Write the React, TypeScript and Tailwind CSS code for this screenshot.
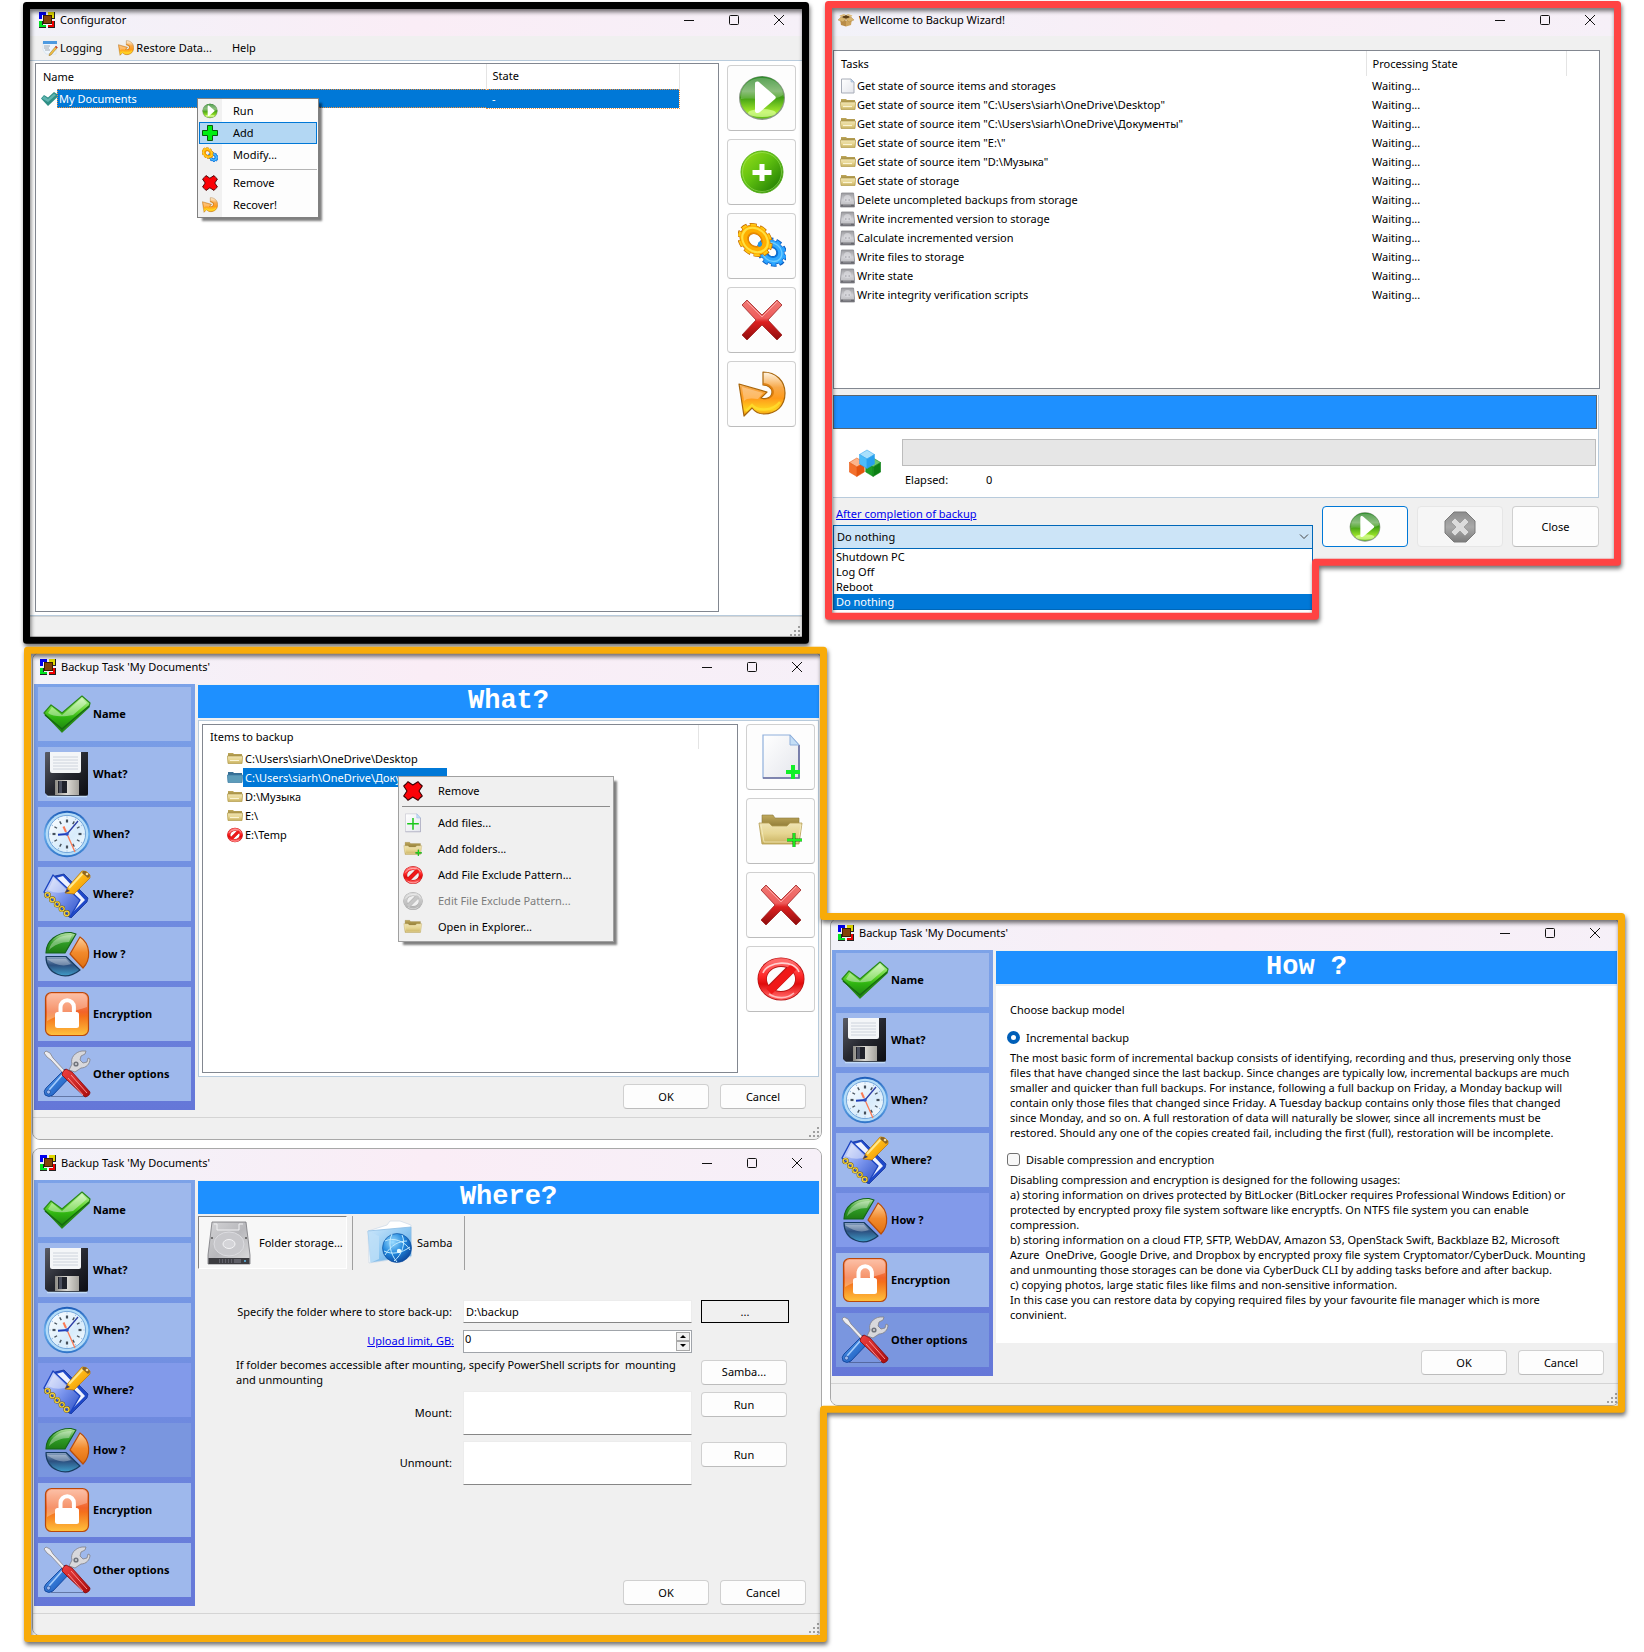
import React from "react";

type IconProps = { className?: string };

/* Shared gradients used by every drawing on the page. */
function Gradients() {
  const lin = (id: string, stops: [string, string][], x2 = 0, y2 = 1) => (
    <linearGradient id={id} x1="0" y1="0" x2={x2} y2={y2}>
      {stops.map(([o, c]) => (
        <stop key={o} offset={o} stopColor={c} />
      ))}
    </linearGradient>
  );
  return (
    <svg className="absolute h-0 w-0" aria-hidden="true">
      <defs>
        {lin("gArrow", [["0", "#fff6e6"], ["0.35", "#f7a94a"], ["0.6", "#ff9a1a"], ["0.85", "#ffd21f"], ["1", "#f08a10"]])}
        {lin("gCheck", [["0", "#c8f5b0"], ["0.4", "#5fd42c"], ["0.6", "#2fb411"], ["1", "#1c7c10"]])}
        {lin("gBall", [["0", "#2c8a2a"], ["0.35", "#6fae5c"], ["0.5", "#3f9e14"], ["0.85", "#a4ea2c"], ["1", "#5cb813"]])}
        {lin("gPlusBall", [["0", "#9be01a"], ["0.45", "#5fc010"], ["0.8", "#2f8c06"], ["1", "#55b52a"]], 1, 1)}
        {lin("gRedX", [["0", "#f07a74"], ["0.45", "#ee5c5c"], ["0.55", "#dc2020"], ["1", "#8f0c0c"]])}
        {lin("gBan", [["0", "#ff6a6a"], ["0.4", "#ff2a2a"], ["0.65", "#e00a0a"], ["1", "#ff5a5a"]])}
        {lin("gBanGray", [["0", "#d8d8d8"], ["1", "#b4b4b4"]])}
        {lin("gFolder", [["0", "#efe3b4"], ["0.5", "#e6d591"], ["1", "#c8b160"]])}
        {lin("gFolderBack", [["0", "#c0a95c"], ["1", "#8c7734"]])}
        {lin("gPage", [["0", "#ffffff"], ["1", "#e4e6ec"]], 1, 1)}
        {lin("gDisk", [["0", "#9a9a9e"], ["0.5", "#d2d2d6"], ["0.8", "#c2c2c6"], ["1", "#6a6a70"]])}
        {lin("gFloppy", [["0", "#5a5c66"], ["0.5", "#262830"], ["1", "#0c0d12"]], 1, 1)}
        {lin("gMetal", [["0", "#8c8a84"], ["0.5", "#dcdad4"], ["1", "#a4a29c"]], 1, 0)}
        {lin("gClock", [["0", "#1c5cb8"], ["0.5", "#6cb0ee"], ["1", "#2f74c8"]])}
        {lin("gFace", [["0", "#ffffff"], ["0.6", "#d8ecfb"], ["1", "#f8fcff"]], 1, 1)}
        {lin("gBook", [["0", "#dfe6fd"], ["0.5", "#7d97ee"], ["1", "#2b4fc6"]], 1, 1)}
        {lin("gPencil", [["0", "#ffdc5c"], ["0.5", "#fdb614"], ["1", "#e48c04"]], 1, 1)}
        {lin("gPieG", [["0", "#bce6a8"], ["0.5", "#2f9c26"], ["1", "#1f7c14"]])}
        {lin("gPieO", [["0", "#fdd09c"], ["0.5", "#f28a2c"], ["1", "#e07010"]])}
        {lin("gPieB", [["0", "#8fa6c4"], ["0.45", "#2c5080"], ["1", "#3f9cc8"]])}
        {lin("gLock", [["0", "#fca884"], ["0.45", "#f2642a"], ["0.55", "#f4701c"], ["1", "#ffc23c"]])}
        {lin("gBlueH", [["0", "#5aa0f0"], ["1", "#0c4cb4"]], 1, 1)}
        {lin("gRedH", [["0", "#f04040"], ["1", "#a80c0c"]], 1, 1)}
        {lin("gHdd", [["0", "#d4d4d6"], ["0.5", "#b8b8bc"], ["1", "#dededf"]], 1, 1)}
        {lin("gSamba", [["0", "#cfe8fb"], ["0.5", "#8fc8f2"], ["1", "#4f9ee0"]], 1, 1)}
        {lin("gStop", [["0", "#8c8c8c"], ["0.5", "#aaaaaa"], ["1", "#7c7c7c"]])}
        <radialGradient id="gGlobe" cx="0.35" cy="0.3" r="0.8">
          <stop offset="0" stopColor="#9cdcff" />
          <stop offset="0.5" stopColor="#1f86dc" />
          <stop offset="1" stopColor="#0a3f94" />
        </radialGradient>
      </defs>
    </svg>
  );
}

const AppIcon = () => (
  <svg className="h-4 w-4 shrink-0" viewBox="0 0 16 16" shapeRendering="crispEdges" aria-hidden="true">
    <path d="M0 0h7v3H3v4H0z" fill="#0000ee" />
    <path d="M9 0h7v7h-3V3H9z" fill="#e0d800" />
    <path d="M0 9h3v4h4v3H0z" fill="#00e020" />
    <path d="M13 9h3v7H9v-3h4z" fill="#ee0000" />
    <path d="M15 0h1v7h-3V6h2zM3 9h1v4H3zM0 15h7v1H0zM15 9h1v7H9v-1h6z" fill="#222" />
    <path d="M4 3h9v9H4z" fill="#3a1c04" />
    <path d="M5 4h7v7H5z" fill="#834208" />
  </svg>
);

const BoxIcon = () => (
  <svg className="h-4 w-4 shrink-0" viewBox="0 0 16 16" aria-hidden="true">
    <path d="M2 7l6 1.500v6L3 13z" fill="#b98c48" />
    <path d="M8 8.500L14 7l-1 6-5 1.500z" fill="#cda35c" />
    <path d="M3 5l5-2 5 2-5 2z" fill="#5c3d12" />
    <path d="M3 5L1.500 3.500 6 2l2 1zM13 5l1.500-1.500L10 2 8 3z" fill="#e0bc78" />
    <path d="M3 5L0 8l5 2 3-3zM13 5l3 3-5 2-3-3z" fill="#d9b46c" stroke="#a37c38" strokeWidth="0.4" />
  </svg>
);

const LogIcon = () => (
  <svg className="h-4 w-4 shrink-0" viewBox="0 0 16 16" aria-hidden="true">
    <path d="M1 2h13v12H4L1 10z" fill="#eef5fc" stroke="#c8d8e8" strokeWidth="0.5" />
    <path d="M1 1h14v3H1z" fill="#4d9ae0" />
    <path d="M2 6h6M2 8h5M3 10h5" stroke="#8a94a0" strokeWidth="0.8" />
    <path d="M14 6l1.5 1.5L9 15l-2 .7.6-2z" fill="#f5c243" stroke="#8c6a20" strokeWidth="0.5" />
    <path d="M14 6l1.5 1.5-1 1L13 7z" fill="#d23c3c" />
  </svg>
);

const RestoreIcon = ({ className = "h-4 w-4" }: IconProps) => (
  <svg className={className} viewBox="0 0 48 46" aria-hidden="true">
    <path
      d="M25 1C38 1 47 10 47 22C47 35 38 43 26 43C21 43 17 41 14 37L6 45L1 13L29 21L23 27C29 29 34 26 34 21C34 17 30 14 25 14Z"
      fill="url(#gArrow)"
      stroke="#a8660c"
      strokeWidth="1.2"
      strokeLinejoin="round"
    />
    <path d="M25 14C30 14 34 17 34 21C34 25 31 28 26 28C31 29 36 26 36 21C36 16 31 12 25 12Z" fill="#d87808" opacity="0.8" />
    <path d="M4 16l21 6-5 6C14 27 8 27 6 30z" fill="#fff" opacity="0.3" />
    <path d="M8 40l6-6c5 6 20 7 28-3" fill="none" stroke="#ffe02e" strokeWidth="2.4" opacity="0.8" />
  </svg>
);

const CheckIcon = () => (
  <svg className="h-[38px] w-12" viewBox="0 0 48 38" aria-hidden="true">
    <path d="M1 18L8 10L19 18L39 1L47 8L46 12L19 37Z" fill="url(#gCheck)" stroke="#2a8a1a" strokeWidth="1.2" strokeLinejoin="round" />
    <path d="M9 12l10 8L39 3l5 5L30 20C20 22 10 22 5 18z" fill="#fff" opacity="0.4" />
    <path d="M2 20l17 14 27-23" fill="none" stroke="#166a10" strokeWidth="1.4" />
  </svg>
);

const SmallCheck = () => (
  <svg className="h-4 w-4 shrink-0" viewBox="0 0 16 16" aria-hidden="true">
    <path d="M0 7.500L3 4l4 2.500L13 1l3 2v3.500L7 15z" fill="#2f8f86" />
    <path d="M1 7.500L3 5l4 3 6-5.500L15 4 7 11z" fill="#5fb4b0" />
  </svg>
);

const PlayIcon = ({ className = "h-12 w-12" }: IconProps) => (
  <svg className={className} viewBox="0 0 48 46" aria-hidden="true">
    <ellipse cx="24" cy="23" rx="23" ry="22" fill="#8a9a86" />
    <ellipse cx="24" cy="22.5" rx="22" ry="21" fill="url(#gBall)" />
    <path d="M3 24C3 10 12 3 24 3s21 7 21 17c-12 8-26 2-42 4z" fill="#fff" opacity="0.2" />
    <ellipse cx="24" cy="38" rx="14" ry="4" fill="#dcff9c" opacity="0.7" />
    <path d="M17 9c0-3 3-3 5-1l15 13c1 1 1 2 0 3L22 37c-2 2-5 1-5-1z" fill="#fff" />
  </svg>
);

const PlusBall = () => (
  <svg className="h-11 w-11" viewBox="0 0 44 44" aria-hidden="true">
    <circle cx="22" cy="22" r="21" fill="url(#gPlusBall)" stroke="#57b01c" strokeWidth="1" />
    <circle cx="22" cy="22" r="19.5" fill="none" stroke="#a6e56a" strokeWidth="0.8" opacity="0.7" />
    <path d="M19.5 14h5v6h7v5h-7v6h-5v-6h-7v-5h7z" fill="#fff" />
  </svg>
);

const PlusPixel = () => (
  <svg className="h-4 w-4" viewBox="0 0 16 16" aria-hidden="true">
    <path d="M5.5 .5h5v5h5v5h-5v5h-5v-5h-5v-5h5z" fill="#00f010" stroke="#0a5a0a" />
  </svg>
);

const CrossPixel = ({ className = "h-4 w-4" }: IconProps) => (
  <svg className={className} viewBox="0 0 20 20" aria-hidden="true">
    <path
      d="M5 .7L9.8 4 15 .7 17 3l2.3 2L16 10l3.3 5-2.3 2-2 2.3L9.8 16 5 19.3 3 17 .7 15 4 10 .7 5 3 3z"
      fill="#fb0207"
      stroke="#3a0000"
      strokeWidth="1.1"
      strokeLinejoin="bevel"
    />
  </svg>
);

const GearsIcon = ({ className = "h-12 w-12" }: IconProps) => (
  <svg className={className} viewBox="0 0 48 46" fill="none" aria-hidden="true">
    <g transform="translate(34 29) rotate(40) scale(1.05 .88)">
      <circle r="13" stroke="#0a5cc0" strokeWidth="5" strokeDasharray="5.2 2.970" />
      <circle r="8.6" stroke="#0a5cc0" strokeWidth="8.600" />
      <circle r="12.6" stroke="#2aa2ff" strokeWidth="3.6" strokeDasharray="4 3.920" strokeDashoffset="-.5" />
      <circle r="8.8" stroke="#2fa8ff" strokeWidth="7" />
      <circle r="10" stroke="#6cccff" strokeWidth="1.400" />
      <circle r="5.600" stroke="#0c74d8" strokeWidth="1.4" />
    </g>
    <g transform="translate(17 17) rotate(40) scale(1.06 .86)">
      <circle r="15.500" stroke="#c46a00" strokeWidth="5" strokeDasharray="6.600 3.140" />
      <circle r="11" stroke="#c46a00" strokeWidth="9.400" />
      <circle r="15" stroke="#ffc814" strokeWidth="4.400" strokeDasharray="5.400 4.025" strokeDashoffset="-.5" />
      <circle r="11.200" stroke="#ffae00" strokeWidth="8" />
      <circle r="13" stroke="#ffe040" strokeWidth="2.2" />
      <circle r="7.400" stroke="#e88a00" strokeWidth="1.4" />
    </g>
    <path d="M20 20c2-3 4-1 4 1s-2 4-4 2z" fill="#1d96ea" />
  </svg>
);

const RedX = () => (
  <svg className="h-10 w-10" viewBox="0 0 40 40" aria-hidden="true">
    <path
      d="M5 0L0 5L14 20L0 35L5 40L20 25L35 40L40 35L26 20L40 5L35 0L20 15Z"
      fill="url(#gRedX)"
      stroke="#9c2222"
      strokeWidth="0.8"
      strokeLinejoin="round"
    />
    <path d="M5 2L20 17 35 2" fill="none" stroke="#fbb" strokeWidth="1" opacity="0.7" />
  </svg>
);

const BanIcon = ({ className = "h-12 w-12", gray = false }: IconProps & { gray?: boolean }) => (
  <svg className={className} viewBox="0 0 48 44" fill="none" aria-hidden="true">
    <ellipse cx="24" cy="22" rx="18.8" ry="16.8" stroke={gray ? "#a8a8a8" : "#b81414"} strokeWidth="9.400" />
    <path d="M36 10L12 34" stroke={gray ? "#a8a8a8" : "#b81414"} strokeWidth="9.400" />
    <ellipse cx="24" cy="22" rx="18.8" ry="16.8" stroke={gray ? "url(#gBanGray)" : "url(#gBan)"} strokeWidth="7.800" />
    <path d="M36.5 10L12 34.5" stroke={gray ? "#c6c6c6" : "#f01818"} strokeWidth="7.800" />
    <path d="M6 16C10 4 38 2 42 15" stroke="#fff" strokeWidth="1.6" opacity="0.7" />
    <path d="M12 37c8 5 18 5 25-1" stroke="#fff" strokeWidth="1.6" opacity="0.6" />
  </svg>
);

const PageIcon = ({ className = "h-4 w-4" }: IconProps) => (
  <svg className={className} viewBox="0 0 16 16" aria-hidden="true">
    <path d="M1.5 1H11l3 3v11H1.500z" fill="url(#gPage)" stroke="#a8adb8" />
    <path d="M11 1v3h3z" fill="#bcd8f2" stroke="#a0b0c8" strokeWidth="0.6" />
  </svg>
);

const FolderIcon = ({ className = "h-4 w-4", blue = false }: IconProps & { blue?: boolean }) => (
  <svg className={className} viewBox="0 0 16 16" aria-hidden="true">
    <path d="M1 2h5l1 1h8v5H1z" fill={blue ? "#376f96" : "url(#gFolderBack)"} />
    <path d="M0.300 5h15.400L15 12.500H1z" fill={blue ? "#5c9cba" : "url(#gFolder)"} stroke={blue ? "#3c7ca4" : "#b39c4c"} strokeWidth="0.7" />
    {!blue && <path d="M3 9.500h9" stroke="#fbf4d4" strokeWidth="1.2" />}
  </svg>
);

const DiskIcon = () => (
  <svg className="h-4 w-4 shrink-0" viewBox="0 0 16 16" aria-hidden="true">
    <path d="M1.500 1h12l1 10v4H.5v-4z" fill="url(#gDisk)" stroke="#8a8a90" strokeWidth="0.8" />
    <circle cx="7.5" cy="6.500" r="3.600" fill="#dcdce0" opacity="0.700" />
    <path d="M5 8h1.500M8.500 8H10" stroke="#8a8a90" strokeWidth="0.800" />
    <path d="M1 12.500h13v2H1z" fill="#68686e" />
    <path d="M3 13h8" stroke="#b0b0b4" strokeWidth="0.8" />
  </svg>
);

const CubesIcon = () => {
  const cube = (x: number, y: number, top: string, left: string, right: string) => (
    <g transform={`translate(${x} ${y})`} stroke={right} strokeWidth="0.5" strokeLinejoin="round">
      <path d="M7.500 0L15 4.500 7.500 9 0 4.500z" fill={top} />
      <path d="M0 4.500L7.500 9v9.500L0 14z" fill={left} />
      <path d="M15 4.500L7.500 9v9.500L15 14z" fill={right} />
    </g>
  );
  return (
    <svg className="h-8 w-8" viewBox="0 0 32 32" aria-hidden="true">
      {cube(0.3, 10, "#fbb48c", "#f4702c", "#e4540f")}
      {cube(16.7, 10, "#6cc86c", "#1c9c24", "#0c8014")}
      {cube(10.5, 2, "#a8e0fc", "#4cbcf8", "#28a0ee")}
    </svg>
  );
};

const StopIcon = () => (
  <svg className="h-8 w-8" viewBox="0 0 32 32" aria-hidden="true">
    <path d="M10 1h12l9 9v12l-9 9H10l-9-9V10z" fill="url(#gStop)" stroke="#7a7a7a" />
    <path d="M11 7l5 5 5-5 4 4-5 5 5 5-4 4-5-5-5 5-4-4 5-5-5-5z" fill="#dcdcdc" stroke="#8a8a8a" strokeWidth="0.6" />
  </svg>
);

const PageAdd = ({ className = "h-12 w-12", small = false }: IconProps & { small?: boolean }) => (
  <svg className={className} viewBox="0 0 48 48" aria-hidden="true">
    <path d="M6 2h27l9 10v33H6z" fill="url(#gPage)" stroke={small ? "#b8b8c4" : "#8fb0dc"} strokeWidth="1.2" />
    <path d="M42 12v33H6" fill="none" stroke="#6a6c9c" strokeWidth="1.6" opacity={small ? 0.4 : 1} />
    <path d="M33 2v10h9z" fill="#c4def6" stroke="#8fb0dc" />
    {small ? (
      <path d="M24 12v28M10 26h28" stroke="#18c818" strokeWidth="3.6" />
    ) : (
      <path d="M36 32v14M29 39h14" stroke="#12f028" strokeWidth="4" />
    )}
  </svg>
);

const FolderAdd = ({ className = "h-12 w-12", plus = true }: IconProps & { plus?: boolean }) => (
  <svg className={className} viewBox="0 0 48 48" aria-hidden="true">
    <path d="M5 8h11l2 3h24v10H5z" fill="url(#gFolderBack)" stroke="#8c7a3c" strokeWidth="0.6" />
    <path d="M2 16h10l3 3h15l3-3h12l-3 21H5z" fill="url(#gFolder)" stroke="#b49c50" strokeWidth="0.8" />
    <path d="M4 18l3 17h34l3-17" fill="none" stroke="#f8efc4" strokeWidth="1" opacity="0.7" />
    {plus && (
      <>
        <path d="M37 26v14M30 33h15" stroke="#0a7a0a" strokeWidth="3" />
        <path d="M37 26v14M30 33h15" stroke="#1ef020" strokeWidth="1.8" />
      </>
    )}
  </svg>
);

const FloppyIcon = () => (
  <svg className="h-12 w-12" viewBox="0 0 48 48" aria-hidden="true">
    <path d="M2 3q0-1 1-1h42v42q0 2-2 2H5l-3-3z" fill="url(#gFloppy)" />
    <path d="M7 2h31v19q0 2-2 2H9q-2 0-2-2z" fill="#f4f6f8" />
    <path d="M10 7h25M10 10h25M10 13h25M10 16h25M10 19h25" stroke="#c4ccd4" strokeWidth="0.8" />
    <path d="M12 30h24v15H12z" fill="url(#gMetal)" />
    <path d="M15 31h9v12h-9z" fill="#20222a" />
    <path d="M16 31h3v12h-3z" fill="#4a4e5c" />
    <path d="M4 46.5h40" stroke="#c4dcf8" strokeWidth="1.4" />
  </svg>
);

const ClockIcon = () => (
  <svg className="h-12 w-12" viewBox="0 0 48 48" aria-hidden="true">
    <circle cx="24" cy="24" r="23.3" fill="url(#gClock)" />
    <circle cx="24" cy="24" r="21.3" fill="#b4dcf8" />
    <circle cx="24" cy="24" r="18.6" fill="url(#gFace)" stroke="#5c94d0" strokeWidth="0.8" />
    {Array.from({ length: 12 }, (_, i) => (
      <path key={i} d="M24 9.5v3" stroke="#44505c" strokeWidth={i % 3 === 0 ? 2.2 : 1.4} transform={`rotate(${i * 30} 24 24)`} />
    ))}
    {Array.from({ length: 12 }, (_, i) => (
      <path key={i} d="M24 6.5v1" stroke="#8cb4dc" strokeWidth="1" transform={`rotate(${i * 30} 24 24)`} />
    ))}
    <path d="M24 24l8 18" stroke="#fb7a54" strokeWidth="1.3" />
    <path d="M20.5 16.500l2.5 5.5" stroke="#fb7a54" strokeWidth="2" />
    <path d="M24 24L35 11" stroke="#2a3ca4" strokeWidth="1.3" />
    <path d="M25 24l-10 .8" stroke="#1c3cb8" strokeWidth="2" />
    <circle cx="24" cy="24" r="1.8" fill="#2c50c8" />
  </svg>
);

const NotebookIcon = () => (
  <svg className="h-12 w-12" viewBox="0 0 48 48" aria-hidden="true">
    <path d="M12 6l9-2 24 24-1 4-16 16-3-2z" fill="#1f48c8" stroke="#13349c" strokeWidth="0.8" />
    <path d="M13 8l7-2 22 24-14 14z" fill="#eef2ff" />
    <path d="M1 22L10 5L37 30L27 47Z" fill="url(#gBook)" stroke="#1c44c0" strokeWidth="1.4" strokeLinejoin="round" />
    <path d="M5 20l6-12 14 13c-6 2-12 3-20-1z" fill="#fff" opacity="0.4" />
    {[0, 1, 2, 3, 4].map((i) => (
      <g key={i} fill="none">
        <circle cx={4.5 + i * 4.8} cy={25 + i * 4.6} r="2.3" stroke="#6c5a10" strokeWidth="2" />
        <circle cx={4.5 + i * 4.8} cy={25 + i * 4.6} r="2.3" stroke="#f0d040" strokeWidth="1.2" />
      </g>
    ))}
    <path d="M22 23l3-6L39 1q4-1 8 4v3L31 24z" fill="url(#gPencil)" stroke="#b87404" strokeWidth="0.7" />
    <path d="M26 18L41 2" stroke="#ffe88c" strokeWidth="2" />
    <path d="M40 1q5 0 7 5l-2 2-6-5z" fill="#8c6420" />
    <circle cx="44" cy="4" r="1.3" fill="#f4dca4" />
    <path d="M22 23l2-4 3 2z" fill="#333a6c" />
  </svg>
);

const PieIcon = () => (
  <svg className="h-12 w-12" viewBox="0 0 48 48" aria-hidden="true">
    <path d="M22 23H3C3 11 14 2 28 2.500L33 4Z" fill="url(#gPieG)" stroke="#14641a" strokeWidth="1.2" strokeLinejoin="round" />
    <path d="M27 24L37 7C48 14 48 30 40 38Z" fill="url(#gPieO)" stroke="#b84c08" strokeWidth="1.2" strokeLinejoin="round" />
    <path d="M3 26.500H23L37 40C22 52 3 44 3 26.500Z" fill="url(#gPieB)" stroke="#183c60" strokeWidth="1.2" strokeLinejoin="round" />
    <path d="M6 20C8 11 16 5 29 5L26 12C18 12 11 15 6 20z" fill="#fff" opacity="0.35" />
    <path d="M4 29h19l5 5c-8 3-16 1-24-5z" fill="#fff" opacity="0.3" />
  </svg>
);

const LockIcon = () => (
  <svg className="h-12 w-12" viewBox="0 0 48 48" aria-hidden="true">
    <rect x="2.5" y="2.5" width="43" height="43" rx="6" fill="url(#gLock)" stroke="#b8480c" strokeWidth="1.2" />
    <path d="M4 9q0-5 5-5h30q5 0 5 5v8C30 22 18 23 4 31z" fill="#fff" opacity="0.3" />
    <path d="M17.5 24v-7a6.700 6.700 0 0 1 13.400 0v7" fill="none" stroke="#fff" strokeWidth="4" />
    <rect x="12" y="22" width="24" height="16" rx="2.5" fill="#fff" />
  </svg>
);

const ToolsIcon = () => (
  <svg className="h-12 w-12" viewBox="0 0 48 48" aria-hidden="true">
    <path d="M8 46.500h36" stroke="#3c4c78" strokeWidth="1.2" opacity="0.6" />
    <path
      d="M26 20l3-6c-2-6 3-12 10-13h4l-1 3-4 2-1 4 3 3 4-1 1-4 2 1c0 5-4 9-9 9l-6 4z"
      fill="#d8d8dc"
      stroke="#808088"
      strokeWidth="0.8"
    />
    <circle cx="33" cy="14" r="2.600" fill="#70747c" />
    <circle cx="33" cy="14" r="1" fill="#d8d8dc" />
    <path d="M22 19l7 6L10 45q-4 3-8 0-2-4 1-7z" fill="url(#gBlueH)" stroke="#0a3c94" strokeWidth="0.8" />
    <path d="M20 24L6 40" stroke="#a4ccfc" strokeWidth="1.6" />
    <circle cx="5.500" cy="42" r="2" fill="#9eb8ec" stroke="#0a3c94" strokeWidth="0.6" />
    <path d="M1 3l2-2 4 2 3 5 12 13-2 2L8 10 4 7z" fill="#ececf0" stroke="#84848c" strokeWidth="0.8" />
    <path d="M19 25q0-4 4-6l6 3 18 20q0 4-5 5L24 30z" fill="url(#gRedH)" stroke="#880808" strokeWidth="0.8" strokeLinejoin="round" />
    <path d="M28 25l16 18M25 28l15 17" stroke="#fb9090" strokeWidth="1" />
  </svg>
);

const HddIcon = () => (
  <svg className="h-11 w-11" viewBox="0 0 44 44" aria-hidden="true">
    <path d="M5 1h34l4 33v9H1v-9z" fill="url(#gHdd)" stroke="#77777c" strokeWidth="0.8" />
    <path d="M7 3h3v6h22V3h4" fill="none" stroke="#f0f0f2" strokeWidth="1" />
    <ellipse cx="22" cy="23" rx="15" ry="12" fill="#c8c8cc" stroke="#dcdce0" strokeWidth="1" />
    <ellipse cx="22" cy="23" rx="6" ry="4.5" fill="#d4d4d8" stroke="#f4f4f6" strokeWidth="1" />
    <circle cx="5" cy="17" r="1" fill="#555" />
    <circle cx="39" cy="17" r="1" fill="#555" />
    <path d="M1.5 37h41v6h-41z" fill="#3c3c40" />
    <path d="M12 38h22v4H12z" fill="#606068" />
    <path d="M14 38v4M17 38v4M20 38v4M23 38v4M26 38v4" stroke="#202024" />
    <circle cx="38" cy="40" r="0.9" fill="#6cf" />
  </svg>
);

const SambaIcon = () => (
  <svg className="h-12 w-12" viewBox="0 0 48 48" aria-hidden="true">
    <path d="M3 12l19-6 3-4 10 0 11 4v32L4 44z" fill="#fff" stroke="#d0dce8" strokeWidth="0.8" />
    <path d="M3 12l43-4v29L6 43z" fill="url(#gSamba)" stroke="#8cbce4" strokeWidth="0.8" />
    <path d="M3 12l11 5v23l-9 4z" fill="#bfe0f8" opacity="0.8" />
    <circle cx="32" cy="29" r="14.5" fill="url(#gGlobe)" stroke="#0a4c9c" strokeWidth="0.6" />
    <path
      d="M20 22c8-4 20 0 25 9M19 32c8 4 18 2 26-4M27 15c-4 8-2 20 5 28M37 16c4 8 0 20-8 26M20 36c6-10 14-14 22-14"
      fill="none"
      stroke="#bfeaff"
      strokeWidth="1"
    />
    <circle cx="34" cy="32" r="2.2" fill="#e8fbff" />
  </svg>
);

/* ---------- window chrome ---------- */

function TitleBar({ icon, title, className }: { icon: React.ReactNode; title: string; className: string }) {
  const btn = "flex h-5 w-[45px] items-center justify-center";
  return (
    <header className={"flex shrink-0 items-start bg-linear-to-r from-[#f2f2f9] via-[#faedf6] to-[#f6f0f8] " + className}>
      <div className="flex h-5 flex-1 items-center gap-[5px]">
        {icon}
        <h2 className="text-[11px] font-normal">{title}</h2>
      </div>
      <button className={btn} aria-label="Minimize">
        <svg className="h-[10px] w-[10px]" viewBox="0 0 10 10" aria-hidden="true">
          <path d="M0 5.5h10" stroke="#111" />
        </svg>
      </button>
      <button className={btn} aria-label="Maximize">
        <svg className="h-[10px] w-[10px]" viewBox="0 0 10 10" aria-hidden="true">
          <rect x="0.5" y="0.5" width="9" height="9" rx="1" fill="none" stroke="#111" />
        </svg>
      </button>
      <button className={btn} aria-label="Close window">
        <svg className="h-[10px] w-[10px]" viewBox="0 0 10 10" aria-hidden="true">
          <path d="M0 0l10 10M10 0L0 10" stroke="#111" />
        </svg>
      </button>
    </header>
  );
}

function StatusBar() {
  return (
    <footer className="flex h-[22px] shrink-0 items-end justify-end border-t border-[#d4d4d4] bg-[#f0f0f0] p-[2px]">
      <svg className="h-[11px] w-[11px]" viewBox="0 0 11 11" fill="#a0a0a0" aria-hidden="true">
        <path d="M9 1h2v2H9zM5 5h2v2H5zM9 5h2v2H9zM1 9h2v2H1zM5 9h2v2H5zM9 9h2v2H9z" />
      </svg>
    </footer>
  );
}

const flatButton = "flex items-center justify-center rounded border border-[#d0d0d0] border-b-[#bcbcbc] bg-[#fdfdfd]";

function PushButton({ children }: { children: React.ReactNode }) {
  return <button className={flatButton + " h-[25px] w-[86px]"}>{children}</button>;
}

function ToolButton({ label, children }: { label: string; children: React.ReactNode }) {
  return (
    <button aria-label={label} className={flatButton + " h-[66px] w-[69px]"}>
      {children}
    </button>
  );
}

/* ---------- task window ---------- */

const sections: [string, () => React.JSX.Element][] = [
  ["Name", CheckIcon],
  ["What?", FloppyIcon],
  ["When?", ClockIcon],
  ["Where?", NotebookIcon],
  ["How ?", PieIcon],
  ["Encryption", LockIcon],
  ["Other options", ToolsIcon],
];

function TaskWindow({
  heading,
  active,
  hover,
  className,
  children,
}: {
  heading: string;
  active?: string;
  hover?: string;
  className: string;
  children: React.ReactNode;
}) {
  return (
    <section className={"flex flex-col overflow-hidden rounded-lg border border-[#a8a8a8] bg-[#f0f0f0] " + className}>
      <TitleBar icon={<AppIcon />} title="Backup Task 'My Documents'" className="h-[31px] pt-1 pr-[2px] pl-[7px]" />
      <div className="flex gap-[3px] pr-[2px] pl-px">
        <nav className="mb-[7px] flex w-[161px] shrink-0 flex-col gap-[6px] bg-linear-to-b from-[#7ca2e8] to-[#6577d8] px-1 pt-[3px] pb-[9px]">
          {sections.map(([name, Icon]) => (
            <button
              key={name}
              className={
                "flex h-[54px] items-center gap-[2px] pl-[5px] font-bold " +
                (name === active ? "bg-[#829aea]" : name === hover ? "bg-[#7a96df]" : "bg-[#9eb8ec]")
              }
            >
              <Icon />
              {name}
            </button>
          ))}
        </nav>
        <div className="flex min-w-0 flex-1 flex-col pt-px">
          <h3 className="h-[33px] shrink-0 bg-[#1e90ff] text-center font-['Liberation_Mono',monospace] text-[27px] leading-[33px] font-bold text-white">
            {heading}
          </h3>
          {children}
          <div className="mt-[7px] mb-2 flex shrink-0 justify-end gap-[11px] pr-[13px]">
            <PushButton>OK</PushButton>
            <PushButton>Cancel</PushButton>
          </div>
        </div>
      </div>
      <StatusBar />
    </section>
  );
}

/* ---------- Configurator ---------- */

function ConfiguratorMenu() {
  const item = "flex h-[22px] items-center gap-[15px] border pl-[2px] pr-2 text-left";
  const rows: [string, React.ReactNode][] = [
    ["Run", <PlayIcon className="h-4 w-4" />],
    ["Add", <PlusPixel />],
    ["Modify...", <GearsIcon className="h-4 w-4" />],
    ["Remove", <CrossPixel />],
    ["Recover!", <RestoreIcon />],
  ];
  return (
    <div
      role="menu"
      className="absolute top-[34px] left-[161px] flex w-[122px] flex-col border border-[#808080] bg-[linear-gradient(to_right,#f1f1f1_24px,#fdfdfd_24px)] p-px shadow-[4px_4px_2px_-1px_rgba(0,0,0,0.5)]"
    >
      {rows.map(([name, icon]) => (
        <React.Fragment key={name}>
          {name === "Remove" && <div role="separator" className="my-[2px] ml-[31px] h-px border-b border-[#b4b4b4] pb-px" />}
          <button role="menuitem" className={item + (name === "Add" ? " border-[#0078d7] bg-[#b3d7f3]" : " border-transparent")}>
            {icon}
            {name}
          </button>
        </React.Fragment>
      ))}
    </div>
  );
}

function Configurator() {
  const menu = "flex items-center gap-[2px]";
  return (
    <section className="mt-[9px] mr-7 ml-[30px] flex flex-col bg-white">
      <TitleBar icon={<AppIcon />} title="Configurator" className="h-[27px] pt-px pr-px pl-[9px]" />
      <nav className="flex h-[24px] items-center bg-[#f0f0f0] pl-3">
        <button className={menu}>
          <LogIcon />
          Logging
        </button>
        <button className={menu + " ml-4"}>
          <RestoreIcon />
          Restore Data...
        </button>
        <button className={menu + " ml-5"}>Help</button>
      </nav>
      <div className="flex gap-2 border-y border-[#b8cbdc] pt-[2px] pr-[6px] pb-[3px] pl-[5px]">
        <div className="relative min-h-[549px] flex-1 border border-[#828790]">
          <table className="w-full table-fixed border-collapse text-left">
            <colgroup>
              <col className="w-[450px]" />
              <col className="w-[193px]" />
              <col />
            </colgroup>
            <thead>
              <tr className="h-[25px]">
                <th className="border-r border-[#e4e4e4] pl-[7px] font-normal">Name</th>
                <th className="border-r border-[#e4e4e4] pl-[6px] font-normal">State</th>
                <td />
              </tr>
            </thead>
            <tbody>
              <tr>
                <td className="p-0">
                  <div className="flex h-[19px] items-center pl-[5px]">
                    <SmallCheck />
                    <span className="flex h-[19px] flex-1 items-center border-y border-l border-dotted border-[#f0913c] bg-[#0078d7] pl-px text-white">
                      My Documents
                    </span>
                  </div>
                </td>
                <td className="border-y border-r border-dotted border-[#f0913c] bg-[#0078d7] p-0 pl-[6px] text-white">-</td>
                <td />
              </tr>
            </tbody>
          </table>
          <ConfiguratorMenu />
        </div>
        <div className="flex w-[69px] flex-col gap-2 pt-[2px]">
          <ToolButton label="Run">
            <PlayIcon />
          </ToolButton>
          <ToolButton label="Add">
            <PlusBall />
          </ToolButton>
          <ToolButton label="Modify">
            <GearsIcon />
          </ToolButton>
          <ToolButton label="Remove">
            <RedX />
          </ToolButton>
          <ToolButton label="Recover">
            <RestoreIcon className="h-12 w-12" />
          </ToolButton>
        </div>
      </div>
      <StatusBar />
    </section>
  );
}

/* ---------- Wizard ---------- */

const tasks: [string, "page" | "folder" | "disk"][] = [
  ["Get state of source items and storages", "page"],
  ['Get state of source item "C:\\Users\\siarh\\OneDrive\\Desktop"', "folder"],
  ['Get state of source item "C:\\Users\\siarh\\OneDrive\\Документы"', "folder"],
  ['Get state of source item "E:\\"', "folder"],
  ['Get state of source item "D:\\Музыка"', "folder"],
  ["Get state of storage", "folder"],
  ["Delete uncompleted backups from storage", "disk"],
  ["Write incremented version to storage", "disk"],
  ["Calculate incremented version", "disk"],
  ["Write files to storage", "disk"],
  ["Write state", "disk"],
  ["Write integrity verification scripts", "disk"],
];

function Wizard() {
  return (
    <section className="mt-[9px] mr-[30px] ml-[3px] flex flex-col bg-[#f0f0f0]">
      <TitleBar icon={<BoxIcon />} title="Wellcome to Backup Wizard!" className="h-[27px] pt-px pr-[2px] pl-[5px]" />
      <div className="mt-[14px] mr-[14px] min-h-[339px] border border-[#828790] bg-white">
        <table className="w-full table-fixed border-collapse text-left">
          <colgroup>
            <col />
            <col className="w-[200px]" />
            <col className="w-[33px]" />
          </colgroup>
          <thead>
            <tr className="h-[25px]">
              <th className="border-r border-[#e4e4e4] pl-[7px] font-normal">Tasks</th>
              <th className="border-r border-[#e4e4e4] pl-[6px] font-normal">Processing State</th>
              <td />
            </tr>
          </thead>
          <tbody>
            {tasks.map(([name, kind]) => (
              <tr key={name} className="h-[19px]">
                <td className="p-0 pl-[6px]">
                  <div className="flex items-center gap-px">
                    {kind === "page" ? <PageIcon /> : kind === "folder" ? <FolderIcon /> : <DiskIcon />}
                    {name}
                  </div>
                </td>
                <td className="p-0 pl-[6px]">Waiting...</td>
                <td />
              </tr>
            ))}
          </tbody>
        </table>
      </div>
      <div className="mt-[6px] mr-[15px] border border-t-0 border-l-0 border-[#b8cbdc] bg-white">
        <div className="mr-px h-[34px] border border-[#5c666e] bg-[#1e90ff]" />
        <div className="flex items-center pt-[10px] pr-[2px] pb-[9px]">
          <div className="w-[69px] shrink-0 pl-4">
            <CubesIcon />
          </div>
          <div className="flex-1">
            <div role="progressbar" aria-label="Backup progress" aria-valuenow={0} className="h-[27px] border border-[#bcbcbc] bg-[#e6e6e6]" />
            <div className="mt-[6px] flex h-4 items-center pl-[3px]">
              <span className="w-[81px]">Elapsed:</span>
              <span>0</span>
            </div>
          </div>
        </div>
      </div>
      <div className="flex gap-[9px] pt-2 pr-[15px] pb-[11px]">
        <div className="relative flex-1">
          <a href="#completion" id="completion" className="ml-[3px] block h-[19px] leading-4 text-[#0000ee] underline">
            After completion of backup
          </a>
          <div className="relative">
            <select
              aria-labelledby="completion"
              defaultValue="Do nothing"
              className="h-[24px] w-full appearance-none border border-[#0067b8] bg-[#cce4f7] pl-[3px]"
            >
              <option>Do nothing</option>
            </select>
            <svg className="pointer-events-none absolute top-[9px] right-1 h-[6px] w-[10px]" viewBox="0 0 10 6" fill="none" aria-hidden="true">
              <path d="M1 .5l4 4 4-4" stroke="#444" />
            </svg>
          </div>
          <ul className="absolute top-[42px] right-0 left-0 border border-[#0067b8] bg-white leading-[15px]">
            {["Shutdown PC", "Log Off", "Reboot", "Do nothing"].map((o) => (
              <li key={o} className={"h-[15px] pl-[2px] " + (o === "Do nothing" ? "bg-[#0078d7] text-white" : "")}>
                {o}
              </li>
            ))}
          </ul>
        </div>
        <button aria-label="Start" className="flex h-[41px] w-[86px] items-center justify-center rounded border border-[#0078d7] bg-[#fdfdfd]">
          <PlayIcon className="h-8 w-8" />
        </button>
        <button
          aria-label="Stop"
          disabled
          className="flex h-[41px] w-[86px] items-center justify-center rounded border border-[#e6e6e6] bg-[#f6f6f6]"
        >
          <StopIcon />
        </button>
        <button className={flatButton + " h-[41px] w-[87px]"}>Close</button>
      </div>
    </section>
  );
}

/* ---------- What? ---------- */

const items: [string, "folder" | "selected" | "ban"][] = [
  ["C:\\Users\\siarh\\OneDrive\\Desktop", "folder"],
  ["C:\\Users\\siarh\\OneDrive\\Документы", "selected"],
  ["D:\\Музыка", "folder"],
  ["E:\\", "folder"],
  ["E:\\Temp", "ban"],
];

function ItemsMenu() {
  const rows: [string, React.ReactNode][] = [
    ["Remove", <CrossPixel className="h-5 w-5" />],
    ["Add files...", <PageAdd className="h-5 w-5" small />],
    ["Add folders...", <FolderAdd className="h-5 w-5" />],
    ["Add File Exclude Pattern...", <BanIcon className="h-5 w-5" />],
    ["Edit File Exclude Pattern...", <BanIcon className="h-5 w-5" gray />],
    ["Open in Explorer...", <FolderAdd className="h-5 w-5" plus={false} />],
  ];
  return (
    <div
      role="menu"
      className="absolute top-[51px] left-[195px] flex w-[216px] flex-col border border-[#a0a0a0] bg-[#f0f0f0] p-px shadow-[4px_4px_2px_-1px_rgba(0,0,0,0.5)]"
    >
      {rows.map(([name, icon], i) => (
        <React.Fragment key={name}>
          {i === 1 && <div role="separator" className="mx-[2px] mt-[2px] mb-[3px] h-px bg-[#8c8c8c]" />}
          <button
            role="menuitem"
            disabled={name.startsWith("Edit")}
            className="flex h-[26px] items-center gap-[15px] pl-[3px] text-left disabled:text-[#7c7c7c]"
          >
            {icon}
            {name}
          </button>
        </React.Fragment>
      ))}
    </div>
  );
}

function WhatPanel() {
  return (
    <div className="mt-[2px] flex flex-1 gap-2 border border-[#b8cbdc] bg-white p-[3px]">
      <div className="relative flex-1 border border-[#828790]">
        <div className="flex h-6 items-center justify-between pr-[38px] pl-[7px]">
          <span>Items to backup</span>
          <span className="h-6 w-px bg-[#e4e4e4]" />
        </div>
        <ul>
          {items.map(([name, kind]) => (
            <li key={name} className="flex h-[19px] items-center pl-6">
              {kind === "ban" ? <BanIcon className="h-4 w-4" /> : <FolderIcon blue={kind === "selected"} />}
              <span
                className={
                  kind === "selected" ? "flex h-[19px] w-[204px] items-center bg-[#0078d7] pl-[2px] text-white" : "pl-[2px]"
                }
              >
                {name}
              </span>
            </li>
          ))}
        </ul>
        <ItemsMenu />
      </div>
      <div className="flex w-[69px] shrink-0 flex-col gap-2">
        <ToolButton label="Add files">
          <PageAdd />
        </ToolButton>
        <ToolButton label="Add folders">
          <FolderAdd />
        </ToolButton>
        <ToolButton label="Remove">
          <RedX />
        </ToolButton>
        <ToolButton label="Exclude">
          <BanIcon />
        </ToolButton>
      </div>
    </div>
  );
}

/* ---------- Where? ---------- */

function WherePanel() {
  const area = "block h-[44px] w-full resize-none border border-[#ececec] border-b-[#868686] bg-white";
  return (
    <div className="mt-[2px] flex-1">
      <div className="flex h-[54px]">
        <button className="flex h-[53px] w-[149px] items-center gap-2 border border-t-[#808080] border-r-white border-b-white border-l-[#808080] bg-[#f7f7f7] pl-2">
          <HddIcon />
          Folder storage...
        </button>
        <span className="ml-[5px] w-px bg-[#a0a0a0]" />
        <button className="flex w-[111px] items-center gap-1 pl-3">
          <SambaIcon />
          Samba
        </button>
        <span className="w-px bg-[#a0a0a0]" />
      </div>
      <form className="mt-[30px] grid grid-cols-[256px_229px_88px] grid-rows-[23px_24px_26px_44px_44px] items-center gap-x-[9px] gap-y-[6px]">
        <label htmlFor="folder" className="pr-[2px] text-right">
          Specify the folder where to store back-up:
        </label>
        <input
          id="folder"
          defaultValue="D:\backup"
          className="h-[23px] w-full border border-[#ececec] border-b-[#868686] bg-white px-[2px]"
        />
        <button type="button" className="h-[23px] w-full border border-black bg-[#f0f0f0]">
          ...
        </button>

        <a href="#limit" id="limitLabel" className="justify-self-end text-[#0000ee] underline">
          Upload limit, GB:
        </a>
        <div className="flex h-[23px] border border-[#a0a4aa] bg-white">
          <input id="limit" aria-labelledby="limitLabel" defaultValue="0" className="min-w-0 flex-1 px-px pb-1" />
          <div className="flex w-[15px] flex-col py-px pr-px">
            <button type="button" aria-label="Increase" className="flex flex-1 items-center justify-center border border-[#a8a8a8] bg-[#f0f0f0]">
              <svg className="h-[3px] w-[6px]" viewBox="0 0 6 3" aria-hidden="true">
                <path d="M3 0l3 3H0z" />
              </svg>
            </button>
            <button type="button" aria-label="Decrease" className="flex flex-1 items-center justify-center border border-[#a8a8a8] bg-[#f0f0f0]">
              <svg className="h-[3px] w-[6px]" viewBox="0 0 6 3" aria-hidden="true">
                <path d="M3 3L0 0h6z" />
              </svg>
            </button>
          </div>
        </div>
        <span />

        <p className="col-span-2 pl-[38px] leading-[15px] whitespace-pre">
          {"If folder becomes accessible after mounting, specify PowerShell scripts for  mounting\nand unmounting"}
        </p>
        <PushButton>Samba...</PushButton>

        <label htmlFor="mount" className="pr-[2px] text-right">
          Mount:
        </label>
        <textarea id="mount" className={area} />
        <div className="self-start pt-px">
          <PushButton>Run</PushButton>
        </div>

        <label htmlFor="unmount" className="pr-[2px] text-right">
          Unmount:
        </label>
        <textarea id="unmount" className={area} />
        <div className="self-start pt-px">
          <PushButton>Run</PushButton>
        </div>
      </form>
    </div>
  );
}

/* ---------- How? ---------- */

const incrementalText = `The most basic form of incremental backup consists of identifying, recording and thus, preserving only those
files that have changed since the last backup. Since changes are typically low, incremental backups are much
smaller and quicker than full backups. For instance, following a full backup on Friday, a Monday backup will
contain only those files that changed since Friday. A Tuesday backup contains only those files that changed
since Monday, and so on. A full restoration of data will naturally be slower, since all increments must be
restored. Should any one of the copies created fail, including the first (full), restoration will be incomplete.`;

const compressionText = `Disabling compression and encryption is designed for the following usages:
a) storing information on drives protected by BitLocker (BitLocker requires Professional Windows Edition) or
protected by encrypted proxy file system software like encryptfs. On NTFS file system you can enable
compression.
b) storing information on a cloud FTP, SFTP, WebDAV, Amazon S3, OpenStack Swift, Backblaze B2, Microsoft
Azure  OneDrive, Google Drive, and Dropbox by encrypted proxy file system Cryptomator/CyberDuck. Mounting
and unmounting those storages can be done via CyberDuck CLI by adding tasks before and after backup.
c) copying photos, large static files like films and non-sensitive information.
In this case you can restore data by copying required files by your favourite file manager which is more
convinient.`;

function HowPanel() {
  const row = "-ml-[3px] flex h-4 items-center gap-[6px]";
  return (
    <form className="mt-[2px] flex-1 bg-white pt-4 pl-[14px] leading-[15px]">
      <p className="h-4">Choose backup model</p>
      <label className={row + " mt-[11px]"}>
        <input
          type="radio"
          name="model"
          defaultChecked
          className="h-[13px] w-[13px] appearance-none rounded-full border-4 border-[#005fb8] bg-white"
        />
        Incremental backup
      </label>
      <p className="mt-[5px] whitespace-pre">{incrementalText}</p>
      <label className={row + " mt-[11px]"}>
        <input type="checkbox" className="h-[13px] w-[13px] appearance-none rounded-[3px] border border-[#707070] bg-[#f8f8f8]" />
        Disable compression and encryption
      </label>
      <p className="mt-[5px] whitespace-pre">{compressionText}</p>
    </form>
  );
}

/* ---------- coloured outlines around the window groups ---------- */

function Outlines() {
  return (
    <svg
      className="pointer-events-none absolute inset-0 h-full w-full [filter:drop-shadow(1px_3px_2px_rgba(0,0,0,0.55))]"
      viewBox="0 0 1644 1652"
      preserveAspectRatio="none"
      fill="none"
      strokeWidth="7"
      strokeLinejoin="round"
      aria-hidden="true"
    >
      <path vectorEffect="non-scaling-stroke" stroke="#000" d="M26.5 5.5H805.5V639.5H26.5Z" />
      <path vectorEffect="non-scaling-stroke" stroke="#ff4343" d="M828.5 4.5H1617.5V561.5H1315.5V615.5H828.5Z" />
      <path
        vectorEffect="non-scaling-stroke"
        stroke="#f8ab09"
        d="M27.5 649.5H823.5V915.5H1621.5V1407.5H823.5V1636.5H27.5Z"
      />
    </svg>
  );
}

export default function App() {
  return (
    <main className="relative grid w-full grid-cols-[830fr_814fr] items-start bg-white pb-[18px] font-['Noto_Sans','Open_Sans',sans-serif] text-[11px] leading-4 text-black">
      <Gradients />
      <div className="flex min-w-0 flex-col">
        <Configurator />
        <TaskWindow heading="What?" className="mt-[14px] mr-2 ml-8">
          <WhatPanel />
        </TaskWindow>
        <TaskWindow heading="Where?" active="Where?" hover="How ?" className="mt-2 mr-2 ml-8">
          <WherePanel />
        </TaskWindow>
      </div>
      <div className="flex min-w-0 flex-col">
        <Wizard />
        <TaskWindow heading="How ?" active="How ?" hover="Other options" className="mt-[358px] mr-6">
          <HowPanel />
        </TaskWindow>
      </div>
      <Outlines />
    </main>
  );
}
